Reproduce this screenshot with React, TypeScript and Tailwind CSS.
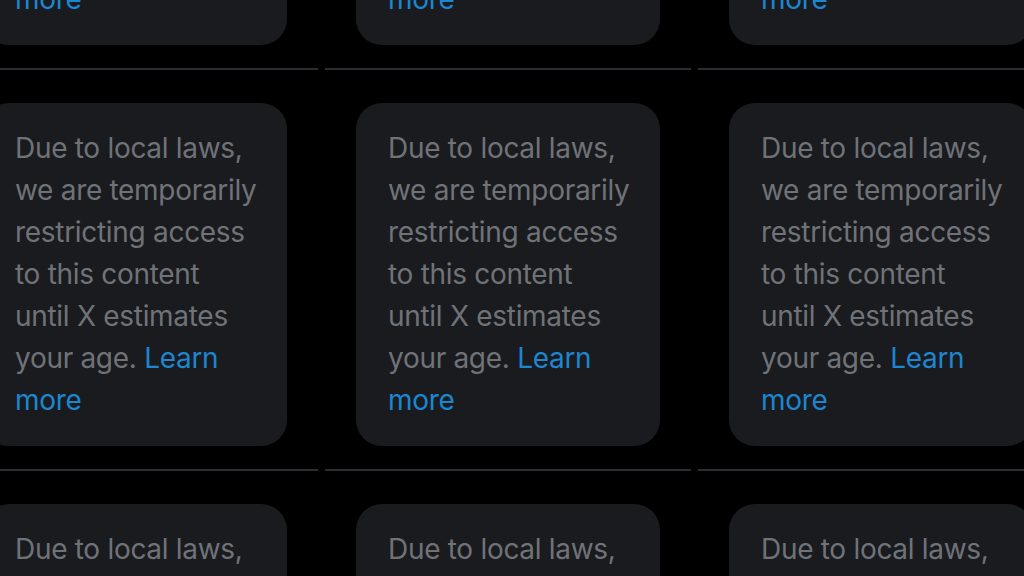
const rows = [0, 1, 2]
const cols = [0, 1, 2]

function RestrictedCard() {
  return (
    <div className="mx-[31px] h-[343px] rounded-[26px] bg-[#1a1b1f] pl-[32px] pt-[24px]">
      <p className="w-[246px] text-[28px] leading-[42px] tracking-[-0.3px] text-[#6f7378]" style={{ fontFamily: 'Inter, "Noto Sans", sans-serif' }}>
        Due to local laws, we are temporarily restricting access to this content until X estimates your age.{' '}
        <a className="text-[#1c86d0]">Learn more</a>
      </p>
    </div>
  )
}

export default function App() {
  return (
    <div className="h-[576px] w-[1024px] overflow-hidden bg-black">
      <div className="-ml-[48px] -mt-[331px] grid w-[1112px] grid-cols-[366px_366px_366px] gap-x-[7px]">
        {rows.map((r) =>
          cols.map((c) => (
            <div key={`${r}-${c}`} className="border-b-2 border-[#2a2d31] pt-[33px] pb-[23px]">
              <RestrictedCard />
            </div>
          )),
        )}
      </div>
    </div>
  )
}
